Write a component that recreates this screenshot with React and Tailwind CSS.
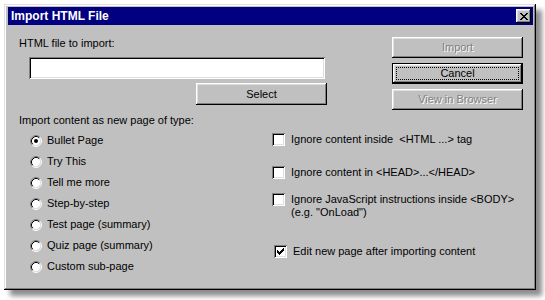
import React from 'react';

const raised = 'shadow-[inset_-1px_-1px_#000,inset_1px_1px_#fff,inset_-2px_-2px_#808080,inset_2px_2px_#dfdfdf]';
const sunken = 'shadow-[inset_1px_1px_#808080,inset_-1px_-1px_#fff,inset_2px_2px_#000,inset_-2px_-2px_#dfdfdf]';

const Radio = ({ checked }) => (
    <svg width="12" height="12" viewBox="0 0 12 12" className="shrink-0">
        <circle cx="6" cy="6" r="4.5" fill="#fff" />
        <path d="M2.11 9.89 A5.5 5.5 0 0 1 9.89 2.11" stroke="#808080" fill="none" />
        <path d="M9.89 2.11 A5.5 5.5 0 0 1 2.11 9.89" stroke="#fff" fill="none" />
        <path d="M2.82 9.18 A4.5 4.5 0 0 1 9.18 2.82" stroke="#000" fill="none" />
        <path d="M9.18 2.82 A4.5 4.5 0 0 1 2.82 9.18" stroke="#dfdfdf" fill="none" />
        {checked && <circle cx="6" cy="6" r="2" fill="#000" />}
    </svg>
);

const Checkbox = ({ checked }) => (
    <div className={`w-[13px] h-[13px] shrink-0 bg-white ${sunken}`}>
        {checked && (
            <svg width="13" height="13" viewBox="0 0 13 13" shapeRendering="crispEdges">
                <path
                    fill="#000"
                    d="M9 3h1v1h-1z M8 4h2v1h-2z M3 5h1v1h-1z M7 5h3v1h-3z M3 6h2v1h-2z M6 6h3v1h-3z M3 7h5v1h-5z M4 8h3v1h-3z M5 9h1v1h-1z"
                />
            </svg>
        )}
    </div>
);

const Button = ({ children, disabled, isDefault, className = '' }) => {
    if (isDefault) {
        return (
            <div className={`h-[21px] border border-black ${className}`}>
                <div className={`h-full flex items-center justify-center p-[3px] ${raised}`}>
                    <div className="w-full h-full border border-dotted border-black flex items-center justify-center leading-none">
                        {children}
                    </div>
                </div>
            </div>
        );
    }
    return (
        <div
            className={`flex items-center justify-center leading-none ${raised} ${
                disabled ? 'text-[#808080] [text-shadow:1px_1px_0_#fff]' : ''
            } ${className}`}
        >
            {children}
        </div>
    );
};

const pageTypes = [
    'Bullet Page',
    'Try This',
    'Tell me more',
    'Step-by-step',
    'Test page (summary)',
    'Quiz page (summary)',
    'Custom sub-page',
];

const App = () => {
    return (
        <div className="w-[545px] h-[300px] bg-white pt-[4px] pl-[4px] font-['Liberation_Sans',Arial,sans-serif] text-[11px] text-black">
            <div className="w-[532px] h-[286px] bg-[#c0c0c0] pt-[3px] pl-[4px] pr-[3px] shadow-[inset_-1px_-1px_#000,inset_1px_1px_#dfdfdf,inset_-2px_-2px_#808080,inset_2px_2px_#fff,6px_6px_5px_rgba(0,0,0,0.45)]">
                {/* title bar */}
                <div className="h-[18px] bg-[#000080] flex items-center pl-[3px] pr-[2px]">
                    <span className="text-white font-bold text-[12px] leading-none">Import HTML File</span>
                    <div className={`ml-auto w-[15px] h-[14px] bg-[#c0c0c0] flex items-center justify-center ${raised}`}>
                        <svg width="8" height="7" viewBox="0 0 8 7" shapeRendering="crispEdges">
                            <path
                                fill="#000"
                                d="M0 0h2v1h-2z M6 0h2v1h-2z M1 1h2v1h-2z M5 1h2v1h-2z M2 2h4v1h-4z M3 3h2v1h-2z M2 4h4v1h-4z M1 5h2v1h-2z M5 5h2v1h-2z M0 6h2v1h-2z M6 6h2v1h-2z"
                            />
                        </svg>
                    </div>
                </div>

                <div className="pl-[11px]">
                    <div className="flex">
                        <div className="flex flex-col w-[308px]">
                            <p className="mt-[11px] leading-[14px]">HTML file to import:</p>
                            <div className={`mt-[7px] ml-[10px] w-[296px] h-[22px] bg-white ${sunken}`}></div>
                            <Button className="mt-[4px] ml-[177px] w-[131px] h-[22px]">Select</Button>
                            <p className="mt-[8px] leading-[14px] whitespace-nowrap">Import content as new page of type:</p>
                        </div>
                        <div className="ml-auto mr-[10px] mt-[12px] flex flex-col gap-[5px] w-[131px]">
                            <Button disabled className="h-[21px]">Import</Button>
                            <Button isDefault>Cancel</Button>
                            <Button disabled className="h-[21px]">View in Browser</Button>
                        </div>
                    </div>

                    <div className="flex">
                        <div className="w-[253px] mt-[3px] flex flex-col">
                            {pageTypes.map((t, i) => (
                                <div key={t} className="h-[21px] flex items-center">
                                    <div className="ml-[11px]">
                                        <Radio checked={i === 0} />
                                    </div>
                                    <span className="ml-[5px] leading-[13px]">{t}</span>
                                </div>
                            ))}
                        </div>
                        <div className="flex flex-col">
                            <div className="mt-[6px] flex gap-[6px] leading-[13px]">
                                <Checkbox />
                                <span className="whitespace-pre">Ignore content inside  &lt;HTML ...&gt; tag</span>
                            </div>
                            <div className="mt-[20px] flex gap-[6px] leading-[13px]">
                                <Checkbox />
                                <span>Ignore content in &lt;HEAD&gt;...&lt;/HEAD&gt;</span>
                            </div>
                            <div className="mt-[14px] flex gap-[6px] leading-[13px]">
                                <Checkbox />
                                <span>
                                    Ignore JavaScript instructions inside &lt;BODY&gt;
                                    <br />
                                    (e.g. "OnLoad")
                                </span>
                            </div>
                            <div className="mt-[26px] ml-[2px] flex gap-[6px] leading-[13px]">
                                <Checkbox checked />
                                <span>Edit new page after importing content</span>
                            </div>
                        </div>
                    </div>
                </div>
            </div>
        </div>
    );
};

export default App;
